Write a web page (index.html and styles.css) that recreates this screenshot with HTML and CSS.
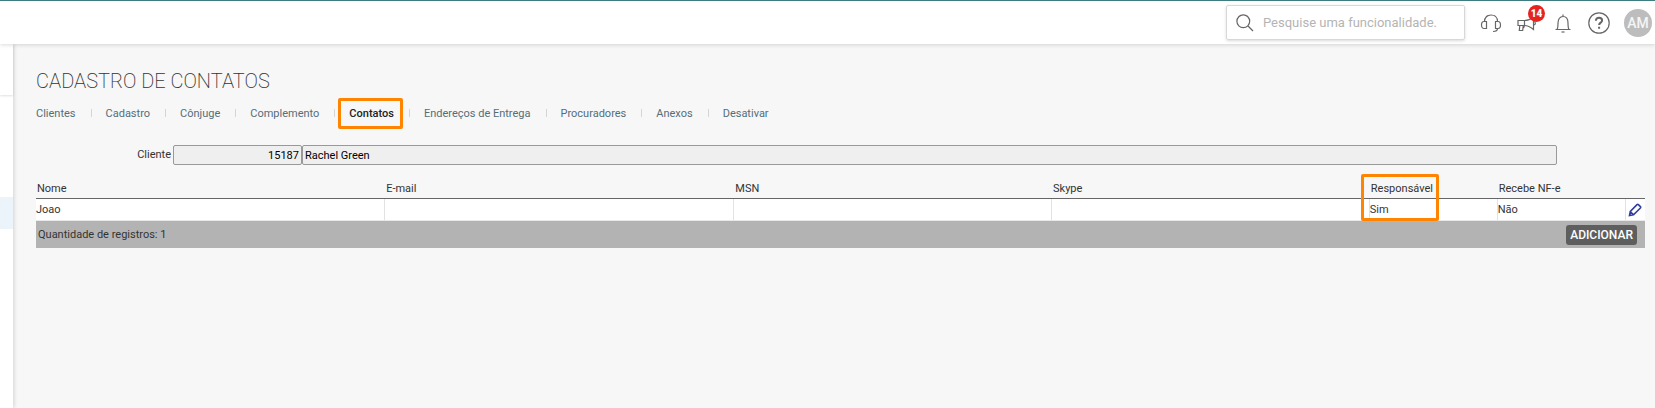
FILE: index.html
```html
<!DOCTYPE html>
<html lang="pt-BR">
<head>
  <meta charset="UTF-8">
  <meta name="viewport" content="width=device-width, initial-scale=1.0">
  <title>Cadastro de Contatos</title>
  <link rel="stylesheet" href="styles.css">
</head>
<body>

  <header class="topbar">
    <label class="search">
      <svg width="18" height="18" viewBox="0 0 18 18" aria-hidden="true">
        <circle cx="7.3" cy="7.3" r="6.4"/>
        <path d="M12 12l5 5"/>
      </svg>
      <input type="text" placeholder="Pesquise uma funcionalidade." aria-label="Pesquise uma funcionalidade">
    </label>

    <nav class="actions">
      <button type="button" class="icon-btn" aria-label="Suporte">
        <svg width="22" height="22" viewBox="0 0 22 22">
          <path d="M4.500 9.500C4.500 5.500 7.300 3 11 3s6.500 2.500 6.500 6.500"/>
          <path d="M6.500 9.500v7H4C2.500 16.500 1.500 15 1.500 13s1-3.500 2.500-3.500z"/>
          <path d="M15.500 9.500v7H18c1.500 0 2.500-1.500 2.500-3.500s-1-3.500-2.500-3.500z"/>
          <path d="M17.500 16.500c0 2-1.500 3-4.500 3"/>
        </svg>
      </button>
      <button type="button" class="icon-btn" aria-label="Novidades">
        <svg width="22" height="22" viewBox="0 0 22 22">
          <path d="M2 8.500h6.500v5H2z"/>
          <path d="M8.500 8.500c3 0 6-1 9-3.500v12.500c-3-2.500-6-4-9-4"/>
          <path d="M17.500 9.500c2.500 0 2.500 3.500 0 3.500"/>
          <path d="M3.800 13.500L3.300 18.500h3.400l.5-5M8.500 13.500l-1 2.500"/>
        </svg>
        <span class="badge">14</span>
      </button>
      <button type="button" class="icon-btn" aria-label="Notificações">
        <svg width="22" height="22" viewBox="0 0 22 22">
          <path d="M11 2.500v2M3.500 17.500h15M5 17.500c1-1.500 1-3 1-6.500 0-4 2-6.500 5-6.500s5 2.500 5 6.500c0 3.500 0 5 1 6.500"/>
          <path d="M9.500 20h3"/>
        </svg>
      </button>
      <button type="button" class="icon-btn" aria-label="Ajuda">
        <svg width="22" height="22" viewBox="0 0 22 22">
          <circle cx="11" cy="11" r="10.200"/>
          <path class="thick" d="M7.900 8.700c0-1.900 1.300-3 3.100-3s3.100 1.100 3.100 2.700c0 2.200-3 2.300-3 4.700M11.100 14.700v2"/>
        </svg>
      </button>
      <button type="button" class="avatar">AM</button>
    </nav>
  </header>

  <div class="layout">
    <aside class="sidebar">
      <div class="sidebar-head"></div>
      <div class="sidebar-active"></div>
    </aside>

    <main class="content">
      <h1>CADASTRO DE CONTATOS</h1>

      <nav class="tabs">
        <a href="#">Clientes</a>
        <a href="#">Cadastro</a>
        <a href="#">Cônjuge</a>
        <a href="#">Complemento</a>
        <a href="#" class="active">Contatos</a>
        <a href="#">Endereços de Entrega</a>
        <a href="#">Procuradores</a>
        <a href="#">Anexos</a>
        <a href="#">Desativar</a>
      </nav>

      <form class="client">
        <label for="codigo">Cliente</label>
        <input type="text" id="codigo" class="code" value="15187" readonly>
        <input type="text" class="name" value="Rachel Green" aria-label="Nome do cliente" readonly>
      </form>

      <table class="contacts">
        <colgroup>
          <col class="col-wide">
          <col class="col-wide">
          <col class="col-mid">
          <col class="col-mid">
          <col class="col-small">
          <col class="col-small">
          <col>
        </colgroup>
        <thead>
          <tr>
            <th>Nome</th>
            <th>E-mail</th>
            <th>MSN</th>
            <th>Skype</th>
            <th class="marked">Responsável</th>
            <th>Recebe NF-e</th>
            <th></th>
          </tr>
        </thead>
        <tbody>
          <tr>
            <td>Joao</td>
            <td></td>
            <td></td>
            <td></td>
            <td>Sim</td>
            <td>Não</td>
            <td>
              <button type="button" class="edit" aria-label="Editar">
                <svg width="14" height="14" viewBox="0 0 14 14">
                  <path d="M1.500 12.500l.8-4L9 1.600q.7-.6 1.400 0l2 2q.6.700 0 1.400L5.500 11.700zM2.300 8.500l3.200 3.200"/>
                </svg>
              </button>
            </td>
          </tr>
        </tbody>
      </table>

      <div class="summary">
        <span>Quantidade de registros: 1</span>
        <button type="button" class="add">ADICIONAR</button>
      </div>
    </main>
  </div>

</body>
</html>
```

FILE: styles.css
```css
* {
  box-sizing: border-box;
}

body {
  margin: 0;
  min-height: 100vh;
  display: flex;
  flex-direction: column;
  font-family: Roboto, Arial, sans-serif;
  font-size: 11px;
  line-height: 14px;
  color: #333;
  background-color: #f7f7f7;
}

button,
input {
  font-family: inherit;
}

button {
  padding: 0;
  border: none;
  background: none;
  cursor: pointer;
}

svg {
  display: block;
  fill: none;
  stroke: #666;
  stroke-width: 1.2;
}

/* header */
.topbar {
  position: relative;
  z-index: 1;
  display: flex;
  align-items: center;
  justify-content: flex-end;
  gap: 15px;
  height: 44px;
  padding-right: 3px;
  border-top: 1px solid #3d7d82;
  background-color: #fff;
  box-shadow: 0 1px 4px rgba(0, 0, 0, 0.15);
}

.search {
  display: flex;
  align-items: center;
  gap: 9px;
  width: 239px;
  height: 35px;
  padding: 0 9px;
  border: 1px solid #d8d8d8;
  border-radius: 2px;
  box-shadow: 0 1px 3px rgba(0, 0, 0, 0.15);
}

.search input {
  flex: 1;
  min-width: 0;
  padding: 0;
  border: none;
  outline: none;
  font-size: 13px;
  color: #333;
}

.search input::placeholder {
  color: #b4b4b4;
}

.actions {
  display: flex;
  align-items: center;
  gap: 14px;
}

.icon-btn {
  position: relative;
}

.thick {
  stroke-width: 2;
}

.badge {
  position: absolute;
  top: -7px;
  right: -7px;
  width: 17px;
  height: 17px;
  border-radius: 50%;
  background-color: #e52320;
  color: #fff;
  font-size: 10px;
  font-weight: 900;
  line-height: 17px;
  text-align: center;
}

.avatar {
  width: 28px;
  height: 28px;
  border-radius: 50%;
  background-color: #bdbdbd;
  color: #f5f5f5;
  font-size: 14px;
  font-weight: 500;
}

/* page */
.layout {
  flex: 1;
  display: flex;
}

.sidebar {
  width: 13px;
  background-color: #fff;
  box-shadow: 1px 0 4px rgba(0, 0, 0, 0.15);
}

.sidebar-head {
  height: 51px;
  margin-bottom: 102px;
  box-shadow: 0 1px 2px rgba(0, 0, 0, 0.12);
}

.sidebar-active {
  height: 32px;
  background-color: #ebf3fb;
}

.content {
  flex: 1;
  min-width: 0;
  padding: 25px 10px 0 23px;
}

h1 {
  margin: 0;
  font-size: 20px;
  font-weight: 200;
  line-height: 24px;
}

.tabs {
  display: flex;
  align-items: center;
  height: 32px;
  margin-top: 5px;
}

.tabs a {
  color: #546e7a;
  text-decoration: none;
}

.tabs a + a::before {
  content: "";
  display: inline-block;
  width: 1px;
  height: 8px;
  margin: 0 14px 0 15px;
  background-color: #d5d5d5;
}

.tabs .active {
  position: relative;
  color: #222;
  font-weight: 500;
}

/* orange frames */
.tabs .active::after,
.marked::after {
  content: "";
  position: absolute;
  border: 3px solid #ff8400;
  border-radius: 2px;
}

.tabs .active::after {
  top: -9px;
  right: -9px;
  bottom: -8px;
  left: 19px;
}

.client {
  display: flex;
  align-items: center;
  margin: 15px 88px 0 0;
}

.client label {
  width: 137px;
  padding-right: 2px;
  text-align: right;
}

.client input {
  height: 20px;
  padding: 0 2px;
  border: 1px solid #999;
  border-radius: 2px;
  background-color: #efefef;
  font-size: 11px;
  color: #000;
}

.client .code {
  width: 129px;
  text-align: right;
}

.client .name {
  flex: 1;
}

.contacts {
  width: 100%;
  margin-top: 14px;
  border-collapse: separate;
  border-spacing: 0;
  table-layout: fixed;
}

.col-wide {
  width: 21.7%;
}

.col-mid {
  width: 19.75%;
}

.col-small {
  width: 7.95%;
}

.contacts th {
  height: 20px;
  padding: 0 1px;
  border-bottom: 1px solid #666;
  font-weight: 400;
  text-align: left;
}

.contacts td {
  height: 22px;
  padding: 0;
  border-right: 1px solid #e2e2e2;
  border-bottom: 1px solid #e8e8e8;
  background-color: #fff;
}

.contacts td:last-child {
  border-right: none;
}

.contacts .marked {
  position: relative;
}

.marked::after {
  top: -5px;
  left: -9px;
  width: 72px;
  height: 41px;
}

.edit {
  display: block;
  margin: 0 auto;
}

.edit svg {
  stroke: #303f9f;
  stroke-width: 1.6;
}

.summary {
  display: flex;
  align-items: center;
  justify-content: space-between;
  height: 27px;
  padding: 0 8px 0 2px;
  background-color: #b3b3b3;
}

.add {
  height: 20px;
  padding: 0 4px;
  border-radius: 3px;
  background-color: #5e5e5e;
  color: #fff;
  font-size: 12px;
  font-weight: 500;
}
```
